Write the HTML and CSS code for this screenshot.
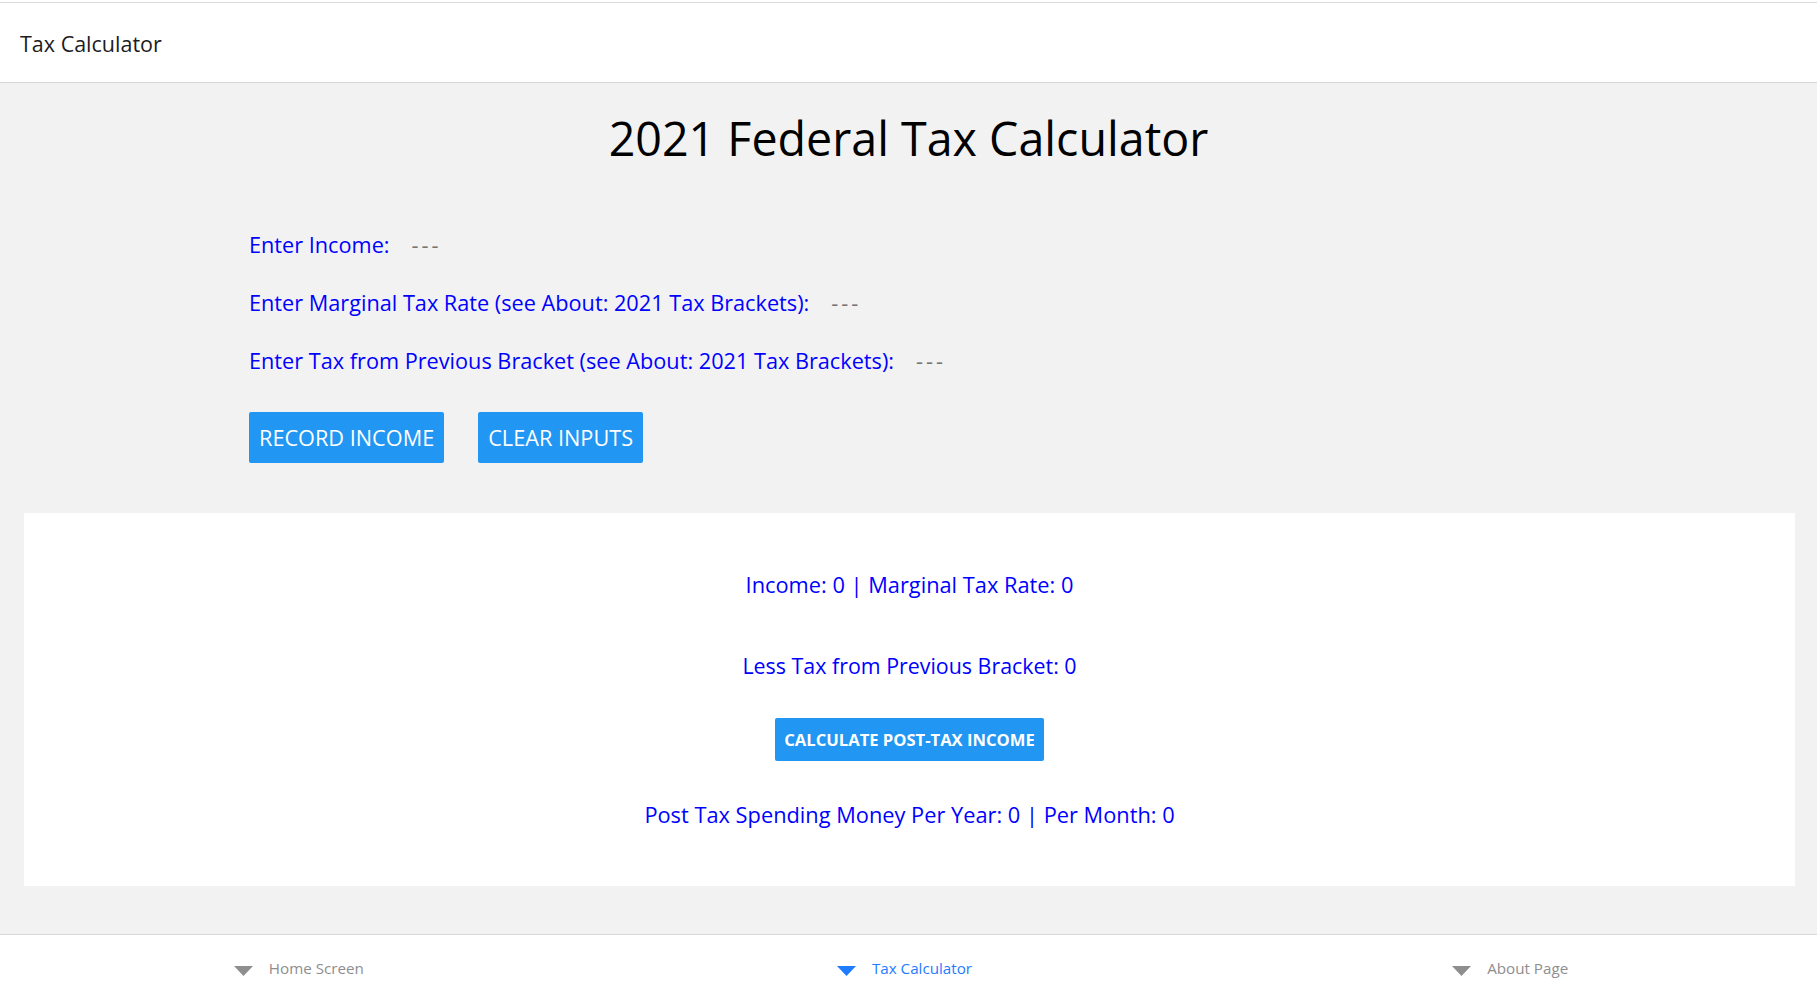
FILE: index.html
```html
<!DOCTYPE html>
<html lang="en">
<head>
<meta charset="utf-8">
<title>Tax Calculator</title>
<link rel="stylesheet" href="styles.css">
</head>
<body>
<div class="app">
  <header class="header">
    <div class="header-title">Tax Calculator</div>
  </header>
  <main class="main">
    <h1 class="page-title">2021 Federal Tax Calculator</h1>
    <div class="form">
      <div class="field"><span class="label">Enter Income:</span><span class="placeholder">---</span></div>
      <div class="field"><span class="label">Enter Marginal Tax Rate (see About: 2021 Tax Brackets):</span><span class="placeholder">---</span></div>
      <div class="field"><span class="label">Enter Tax from Previous Bracket (see About: 2021 Tax Brackets):</span><span class="placeholder">---</span></div>
      <div class="buttons">
        <button class="btn btn-large">RECORD INCOME</button>
        <button class="btn btn-large">CLEAR INPUTS</button>
      </div>
    </div>
    <section class="card">
      <div class="card-line first">Income: 0 | Marginal Tax Rate: 0</div>
      <div class="card-line second">Less Tax from Previous Bracket: 0</div>
      <button class="btn btn-small">CALCULATE POST-TAX INCOME</button>
      <div class="card-line last">Post Tax Spending Money Per Year: 0 | Per Month: 0</div>
    </section>
  </main>
  <nav class="tabbar">
    <div class="tab">
      <svg class="tab-icon" width="19" height="10" viewBox="0 0 19 10"><polygon points="0,0 19,0 9.5,10" fill="#8e8e8f"/></svg>
      <span class="tab-label">Home Screen</span>
    </div>
    <div class="tab active">
      <svg class="tab-icon" width="19" height="10" viewBox="0 0 19 10"><polygon points="0,0 19,0 9.5,10" fill="#1f7bff"/></svg>
      <span class="tab-label">Tax Calculator</span>
    </div>
    <div class="tab">
      <svg class="tab-icon" width="19" height="10" viewBox="0 0 19 10"><polygon points="0,0 19,0 9.5,10" fill="#8e8e8f"/></svg>
      <span class="tab-label">About Page</span>
    </div>
  </nav>
</div>
</body>
</html>
```

FILE: styles.css
```css
* { box-sizing: border-box; }
html, body { margin: 0; padding: 0; }
body {
  font-family: "Open Sans", "Noto Sans", sans-serif;
  background: #ffffff;
  width: 1817px;
  height: 994px;
  overflow: hidden;
}
.app {
  display: flex;
  flex-direction: column;
  height: 994px;
  padding-top: 2px;
  background: #ffffff;
}
.header {
  height: 81px;
  border-top: 1px solid #dcdcdc;
  border-bottom: 1px solid #d8d8d8;
  background: #ffffff;
  display: flex;
  align-items: center;
  padding: 2px 0 0 20px;
  flex-shrink: 0;
}
.header-title {
  font-size: 21.5px;
  font-weight: 500;
  color: #1c1c1e;
}
.main {
  flex: 1;
  background: #f2f2f2;
  display: flex;
  flex-direction: column;
}
.page-title {
  margin: 25px 0 0 0;
  height: 60px;
  line-height: 60px;
  text-align: center;
  font-size: 46.6px;
  font-weight: 400;
  color: #000;
}
.form {
  margin-top: 47px;
  padding-left: 249px;
  display: flex;
  flex-direction: column;
}
.field {
  height: 58px;
  display: flex;
  align-items: center;
  font-size: 21.7px;
}
.label { color: #0000ff; }
.placeholder { color: #757575; margin-left: 22px; letter-spacing: 3px; }
.buttons {
  margin-top: 23px;
  display: flex;
  gap: 34px;
}
.btn {
  background: #2196f3;
  color: #fff;
  border: none;
  border-radius: 2px;
  font-family: inherit;
  padding: 0;
  cursor: pointer;
}
.btn-large {
  height: 51px;
  padding: 0 10px;
  font-size: 21.7px;
  font-weight: 400;
}
.card {
  margin: 50px 22px 0 24px;
  height: 373px;
  background: #ffffff;
  display: flex;
  flex-direction: column;
  align-items: center;
  padding-top: 52px;
}
.card-line {
  height: 40px;
  line-height: 40px;
  font-size: 21.8px;
  color: #0000ff;
}
.card-line.second { margin-top: 41px; font-size: 21.4px; }
.btn-small {
  margin-top: 32px;
  height: 43px;
  padding: 0 9px;
  font-size: 16.6px;
  font-weight: 700;
}
.card-line.last { margin-top: 34px; }
.tabbar {
  height: 60px;
  flex-shrink: 0;
  border-top: 1px solid #d8d8d8;
  background: #ffffff;
  display: grid;
  grid-template-columns: 1fr 1fr 1fr;
}
.tab {
  display: flex;
  justify-content: center;
  align-items: center;
  padding: 6px 8px 0 0;
  gap: 16px;
  color: #8e8e8f;
  font-size: 15.2px;
}
.tab.active { color: #1f7bff; }
.tab-icon { margin-top: 6px; }
```
